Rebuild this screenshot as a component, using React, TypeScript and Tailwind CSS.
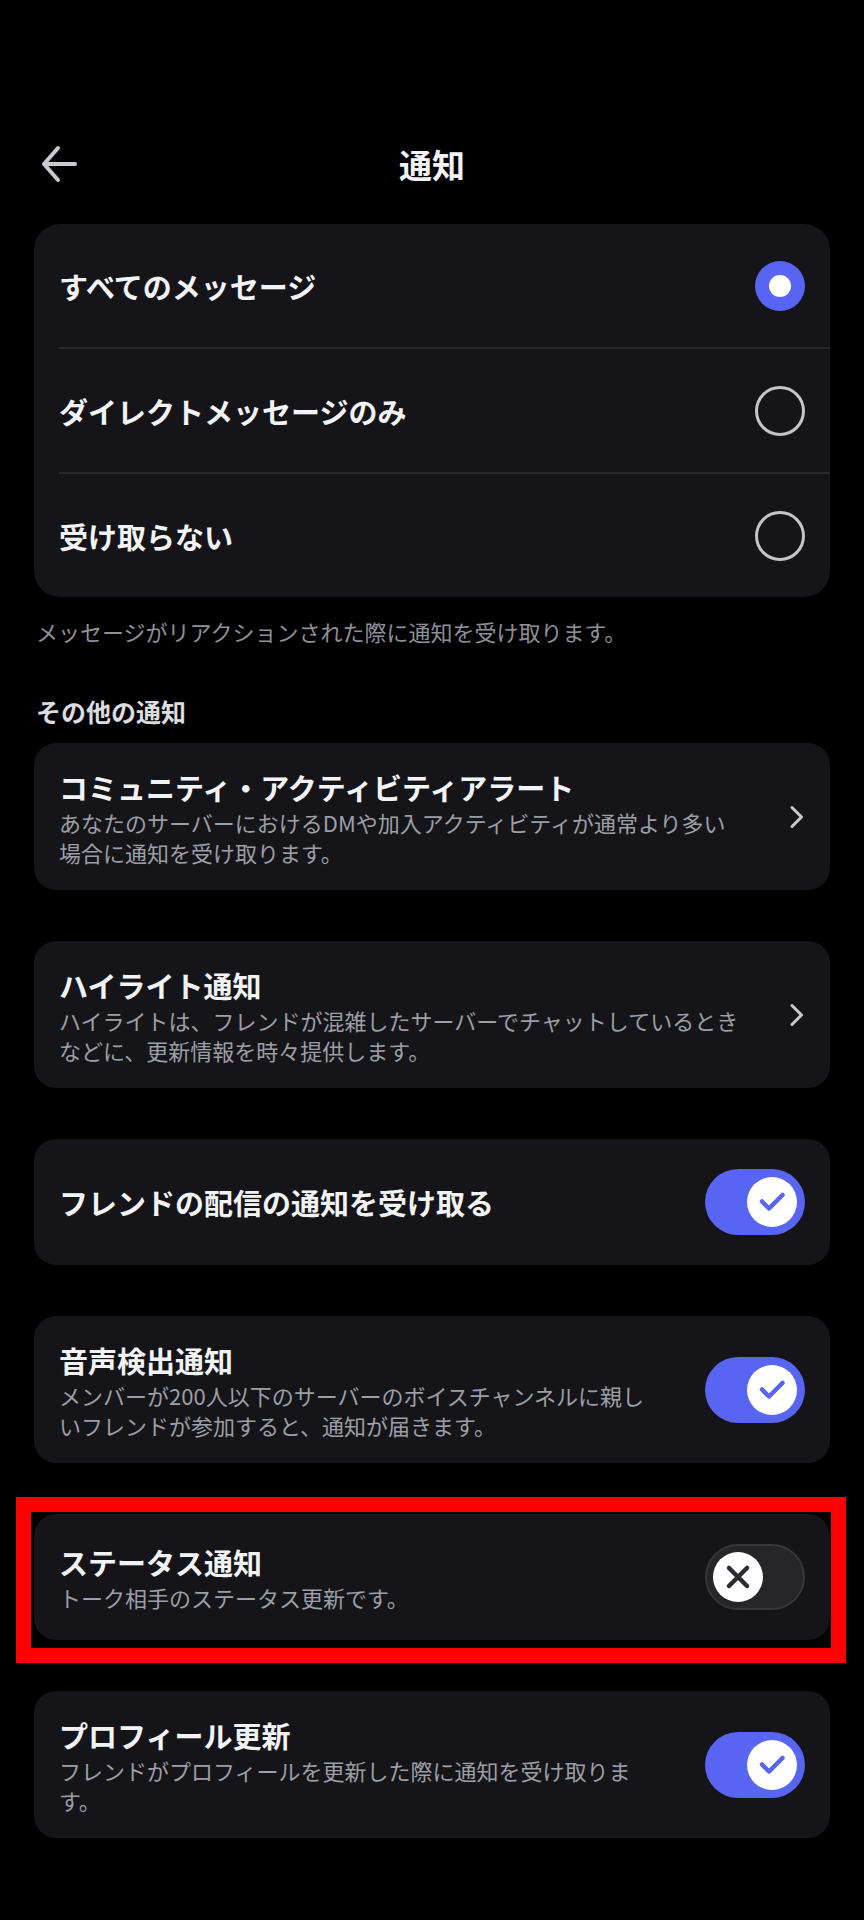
import React from 'react';

const Radio = ({ checked }: { checked: boolean }) =>
  checked ? (
    <div className="flex h-[50px] w-[50px] shrink-0 items-center justify-center rounded-full bg-[#5865f2]">
      <div className="h-[22px] w-[22px] rounded-full bg-white" />
    </div>
  ) : (
    <div className="h-[50px] w-[50px] shrink-0 rounded-full border-[3px] border-[#c4c5ca]" />
  );

const Toggle = ({ on }: { on: boolean }) =>
  on ? (
    <div className="flex h-[66px] w-[100px] shrink-0 items-center justify-end rounded-full bg-[#5865f2] pr-[8px]">
      <div className="flex h-[50px] w-[50px] items-center justify-center rounded-full bg-white">
        <svg width="50" height="50" viewBox="0 0 50 50" fill="none">
          <path
            d="M15 24.5 L22 31.5 L35.5 18"
            stroke="#5865f2"
            strokeWidth="4.5"
            strokeLinecap="round"
            strokeLinejoin="round"
          />
        </svg>
      </div>
    </div>
  ) : (
    <div className="flex h-[66px] w-[100px] shrink-0 items-center justify-start rounded-full border-2 border-[#36373d] bg-[#25252a] pl-[6px]">
      <div className="flex h-[50px] w-[50px] items-center justify-center rounded-full bg-white">
        <svg width="50" height="50" viewBox="0 0 50 50" fill="none">
          <path
            d="M16 16 L34 34 M34 16 L16 34"
            stroke="#2b2c31"
            strokeWidth="4.5"
            strokeLinecap="round"
          />
        </svg>
      </div>
    </div>
  );

const Chevron = () => (
  <svg width="16" height="24" viewBox="0 0 16 24" fill="none" className="shrink-0">
    <path
      d="M3 2.5 L12.5 12 L3 21.5"
      stroke="#c9cacf"
      strokeWidth="3"
      strokeLinecap="round"
      strokeLinejoin="round"
    />
  </svg>
);

type CardProps = {
  title: string;
  desc?: string;
  kind: 'chevron' | 'toggle';
  on?: boolean;
};

const SettingCard = ({ title, desc, kind, on }: CardProps) => (
  <div
    className={`flex min-h-[126px] items-center rounded-[22px] bg-[#151519] py-[23.5px] pl-[25px] pr-[25px] ${
      kind === 'chevron' ? 'gap-[45px]' : 'gap-[56px]'
    }`}
  >
    <div className="min-w-0 flex-1">
      <p className="text-[29px] font-bold leading-[40px] text-[#f2f3f5]">{title}</p>
      {desc && <p className="text-[22px] leading-[30px] text-[#9d9ea6]">{desc}</p>}
    </div>
    {kind === 'chevron' ? <Chevron /> : <Toggle on={!!on} />}
  </div>
);

const options = [
  { label: 'すべてのメッセージ', checked: true },
  { label: 'ダイレクトメッセージのみ', checked: false },
  { label: '受け取らない', checked: false },
];

export default function App() {
  return (
    <div className="min-h-screen w-full bg-black pt-[136px] font-['Noto_Sans_CJK_JP','Noto_Sans',sans-serif]">
      {/* header */}
      <div className="grid h-[56px] grid-cols-[80px_1fr_80px] items-center">
        <div className="pl-[40px]">
          <svg width="40" height="40" viewBox="0 0 40 40" fill="none">
            <path
              d="M4 20 H35 M18 4 L4 20 L18 36"
              stroke="#c9cacf"
              strokeWidth="4"
              strokeLinecap="round"
              strokeLinejoin="round"
            />
          </svg>
        </div>
        <h1 className="text-center text-[33px] font-bold leading-[44px] text-[#f2f3f5]">通知</h1>
        <div />
      </div>

      <div className="px-[34px]">
        {/* message options */}
        <div className="mt-[32px] rounded-[26px] bg-[#151519]">
          {options.map((o, i) => (
            <div key={o.label}>
              {i > 0 && <div className="ml-[25px] h-[2px] bg-[#27272c]" />}
              <div className="flex h-[123px] items-center justify-between pl-[25px] pr-[25px]">
                <span className="text-[29px] font-bold leading-[40px] text-[#f2f3f5]">{o.label}</span>
                <Radio checked={o.checked} />
              </div>
            </div>
          ))}
        </div>
        <p className="mt-[19px] pl-[2px] text-[22px] leading-[30px] text-[#8f9097]">
          メッセージがリアクションされた際に通知を受け取ります。
        </p>

        <h2 className="mt-[48px] pl-[2px] text-[25px] font-bold leading-[34px] text-[#dcdde1]">その他の通知</h2>

        <div className="mt-[15px] flex flex-col gap-[51px]">
          <SettingCard
            kind="chevron"
            title="コミュニティ・アクティビティアラート"
            desc="あなたのサーバーにおけるDMや加入アクティビティが通常より多い場合に通知を受け取ります。"
          />
          <SettingCard
            kind="chevron"
            title="ハイライト通知"
            desc="ハイライトは、フレンドが混雑したサーバーでチャットしているときなどに、更新情報を時々提供します。"
          />
          <SettingCard kind="toggle" on title="フレンドの配信の通知を受け取る" />
          <SettingCard
            kind="toggle"
            on
            title="音声検出通知"
            desc="メンバーが200人以下のサーバーのボイスチャンネルに親しいフレンドが参加すると、通知が届きます。"
          />
          <div className="relative">
            <SettingCard kind="toggle" on={false} title="ステータス通知" desc="トーク相手のステータス更新です。" />
            <div className="pointer-events-none absolute -bottom-[23px] -left-[18px] -right-[16px] -top-[17px] border-[15px] border-[#ff0000]" />
          </div>
          <SettingCard
            kind="toggle"
            on
            title="プロフィール更新"
            desc="フレンドがプロフィールを更新した際に通知を受け取ります。"
          />
        </div>
      </div>
    </div>
  );
}
